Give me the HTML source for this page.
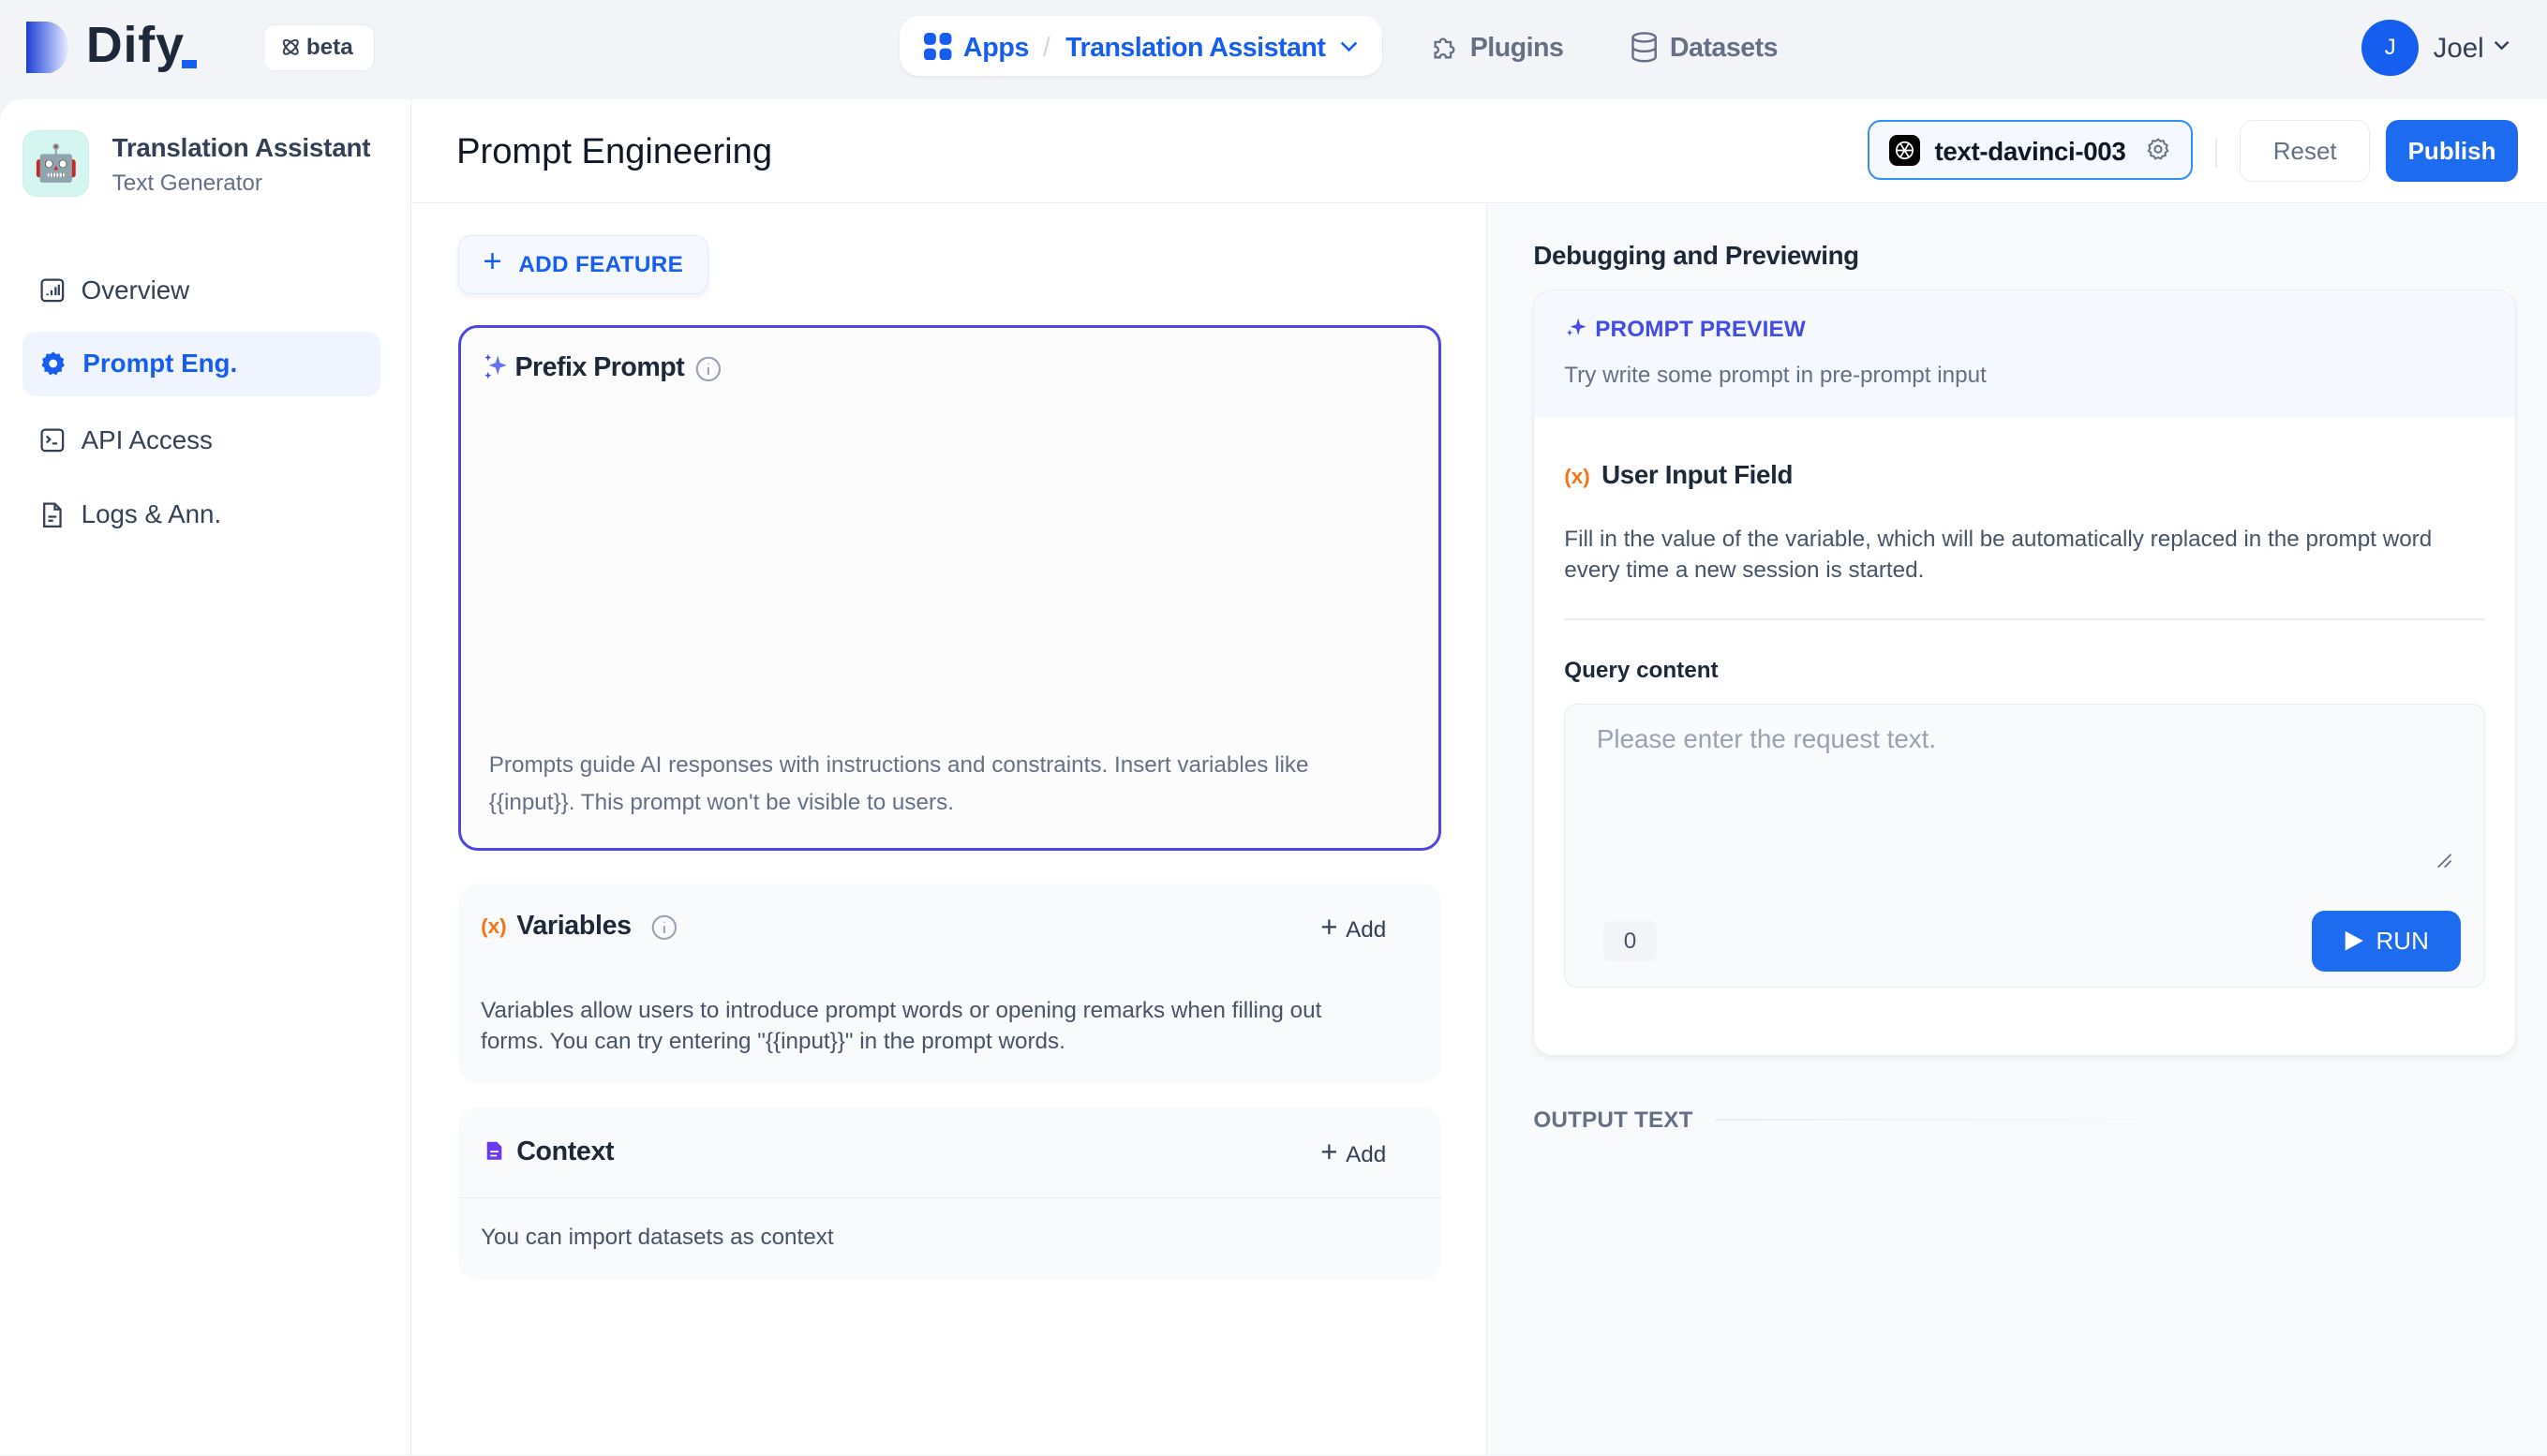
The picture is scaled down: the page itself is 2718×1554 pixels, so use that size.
<!DOCTYPE html>
<html><head><meta charset="utf-8"><style>
*{box-sizing:border-box;margin:0;padding:0}
html,body{width:2718px;height:1554px;overflow:hidden}
body{font-family:"Liberation Sans",sans-serif;background:#f2f4f7;color:#101828}
#r{width:1568px;height:896px;zoom:1.7334;position:relative;background:#f2f4f7}
.a{position:absolute}
.main{left:0;top:61px;width:1568px;height:835px;background:#fff;border-top-left-radius:14px}
.side{left:0;top:0;width:253px;height:835px;border-right:1px solid #eaecf0}
.nav{position:absolute;left:14px;width:220px;height:40px;border-radius:8px;display:flex;align-items:center;padding-left:10px;font-size:16px;color:#344054}
.nav svg{margin-right:10px}
.btn{position:absolute;border-radius:8px;display:flex;align-items:center;justify-content:center;font-size:15px}
</style></head><body><div id="r">
<div class="a" style="left:16px;top:13px;width:30px;height:32px">
<svg width="30" height="32" viewBox="0 0 30 32"><defs><linearGradient id="g" x1="0" y1="0" x2="1" y2="0"><stop offset="0" stop-color="#1c3fd4"/><stop offset="1" stop-color="#e8eeff"/></linearGradient></defs><path d="M0 0H12A14 16 0 0 1 12 32H0Z" fill="url(#g)"/></svg></div>
<div class="a" style="left:53px;top:10px;font-size:31px;font-weight:bold;color:#1d2939;letter-spacing:0.5px">Dify</div>
<div class="a" style="left:112px;top:37px;width:9px;height:5px;background:#155eef"></div>
<div class="a" style="left:162px;top:15px;width:69px;height:29px;background:#fff;border:1px solid #eaecf0;border-radius:7px;font-size:14px;font-weight:bold;color:#344054;padding:6px 0 0 10px">
<svg width="13" height="13" viewBox="0 0 14 14" style="vertical-align:-2px;margin-right:3px"><g fill="none" stroke="#344054" stroke-width="1.2"><ellipse cx="7" cy="7" rx="6" ry="2.6" transform="rotate(45 7 7)"/><ellipse cx="7" cy="7" rx="6" ry="2.6" transform="rotate(-45 7 7)"/></g></svg>beta</div>
<div class="a" style="left:554px;top:10px;width:297px;height:37px;background:#fff;border-radius:12px;box-shadow:0 1px 2px rgba(16,24,40,.06)"></div>
<svg class="a" style="left:569px;top:20px" width="17" height="17" viewBox="0 0 16 16"><g fill="#155eef"><rect x="0" y="0" width="7" height="7" rx="2.5"/><rect x="9" y="0" width="7" height="7" rx="2.5"/><rect x="0" y="9" width="7" height="7" rx="2.5"/><rect x="9" y="9" width="7" height="7" rx="2.5"/></g></svg>
<div class="a" style="left:593px;top:20px;font-size:16.5px;font-weight:bold;color:#155eef;letter-spacing:-0.2px">Apps</div>
<div class="a" style="left:642px;top:20px;font-size:16.5px;color:#d0d5dd">/</div>
<div class="a" style="left:656px;top:20px;font-size:16.5px;font-weight:bold;color:#155eef;letter-spacing:-0.3px">Translation Assistant</div>
<svg class="a" style="left:825px;top:25px" width="11" height="8" viewBox="0 0 11 8"><path d="M1 1.5L5.5 6 10 1.5" fill="none" stroke="#155eef" stroke-width="1.5"/></svg>
<svg class="a" style="left:880px;top:20px" width="19" height="19" viewBox="0 0 20 20"><path d="M4 6h3a2 2 0 1 1 4 0h3v3a2 2 0 1 1 0 4v3h-3a2 2 0 1 0-4 0H4v-3a2 2 0 1 0 0-4z" fill="none" stroke="#667085" stroke-width="1.4"/></svg>
<div class="a" style="left:905px;top:20px;font-size:16.5px;font-weight:bold;color:#667085;letter-spacing:-0.3px">Plugins</div>
<svg class="a" style="left:1003px;top:19px" width="18" height="20" viewBox="0 0 18 20"><g fill="none" stroke="#667085" stroke-width="1.4"><ellipse cx="9" cy="4" rx="7" ry="2.6"/><path d="M2 4v12c0 1.4 3 2.6 7 2.6s7-1.2 7-2.6V4M2 10c0 1.4 3 2.6 7 2.6s7-1.2 7-2.6"/></g></svg>
<div class="a" style="left:1028px;top:20px;font-size:16.5px;font-weight:bold;color:#667085;letter-spacing:-0.3px">Datasets</div>
<div class="a" style="left:1454px;top:12px;width:35px;height:35px;border-radius:50%;background:#155eef;color:#fff;font-size:14px;text-align:center;line-height:35px">J</div>
<div class="a" style="left:1498px;top:20px;font-size:17px;color:#344054">Joel</div>
<svg class="a" style="left:1535px;top:25px" width="10" height="7" viewBox="0 0 10 7"><path d="M1 1l4 4 4-4" fill="none" stroke="#344054" stroke-width="1.4"/></svg>

<div class="a main">
 <div class="a side">
  <div class="a" style="left:14px;top:19px;width:41px;height:41px;border-radius:9px;background:#d5f5f0;border:1px solid #ccefe8;text-align:center;font-size:22px;line-height:40px">🤖</div>
  <div class="a" style="left:69px;top:21px;font-size:16px;font-weight:bold;color:#344054;letter-spacing:-0.1px">Translation Assistant</div>
  <div class="a" style="left:69px;top:44px;font-size:14px;color:#667085">Text Generator</div>
  <div class="nav" style="top:98px"><svg width="16" height="16" viewBox="0 0 16 16"><g fill="none" stroke="#344054" stroke-width="1.3"><rect x="1.5" y="1.5" width="13" height="13" rx="2"/><path d="M5 11v-1M7.5 11V8M10 11V6M12 11V4.5"/></g></svg>Overview</div>
  <div class="nav" style="top:143px;background:#eff4ff;color:#155eef;font-weight:bold"><svg width="17" height="17" viewBox="0 0 16 16"><path d="M8 0.8l1.6 1.4 2.1-.3.6 2 1.9 1-.6 2 1 1.9-1.7 1.3.1 2.1-2.1.3-1.1 1.8L8 13.4l-1.9.9-1.1-1.8-2.1-.3.1-2.1L1.3 8.8l1-1.9-.6-2 1.9-1 .6-2 2.1.3z" fill="#155eef"/><circle cx="8" cy="7.6" r="2.4" fill="#eff4ff"/></svg>Prompt Eng.</div>
  <div class="nav" style="top:190px"><svg width="16" height="16" viewBox="0 0 16 16"><g fill="none" stroke="#344054" stroke-width="1.3"><rect x="1.5" y="1.5" width="13" height="13" rx="2"/><path d="M4.5 5.5l2 2-2 2M8 10h3"/></g></svg>API Access</div>
  <div class="nav" style="top:236px"><svg width="16" height="17" viewBox="0 0 16 17"><g fill="none" stroke="#344054" stroke-width="1.3"><path d="M3 1.5h6.5l3.5 3.5v10.5H3z"/><path d="M9.5 1.5V5H13M5.5 9.5h5M5.5 12h3"/></g></svg>Logs &amp; Ann.</div>
 </div>
 <div class="a" style="left:253px;top:0;width:1315px;height:64px;border-bottom:1px solid #eaecf0"></div>
 <div class="a" style="left:281px;top:20px;font-size:22px;color:#101828">Prompt Engineering</div>
 <div class="a" style="left:1150px;top:13px;width:200px;height:37px;border:1.5px solid #2e90fa;border-radius:8px;background:#f5f8ff"></div>
 <div class="a" style="left:1163px;top:22px;width:19px;height:19px;border-radius:5px;background:#000"><svg width="19" height="19" viewBox="0 0 19 19"><g fill="none" stroke="#fff" stroke-width="1"><circle cx="9.5" cy="9.5" r="5"/><path d="M7 5.5l5 8M12 5.5l-5 8M5 9.5h9"/></g></svg></div>
 <div class="a" style="left:1191px;top:23px;font-size:16px;font-weight:bold;color:#101828;letter-spacing:-0.2px">text-davinci-003</div>
 <svg class="a" style="left:1321px;top:24px" width="15" height="15" viewBox="0 0 16 16"><g fill="none" stroke="#667085" stroke-width="1.2"><path d="M8 1l1.5 1.3 2-.3.6 1.9 1.8 1-.6 1.9 1 1.8-1.6 1.2.1 2-2 .3-1 1.7L8 13l-1.8.8-1-1.7-2-.3.1-2L1.7 8.6l1-1.8-.6-1.9 1.8-1 .6-1.9 2 .3z"/><circle cx="8" cy="7.5" r="2.2"/></g></svg>
 <div class="a" style="left:1364px;top:24px;width:1px;height:18px;background:#eaecf0"></div>
 <div class="btn" style="left:1379px;top:13px;width:80px;height:38px;border:1px solid #eaecf0;color:#667085;background:#fff">Reset</div>
 <div class="btn" style="left:1469px;top:13px;width:81px;height:38px;background:#1d6cf0;color:#fff;font-weight:bold">Publish</div>
 <div class="btn" style="left:282px;top:84px;width:154px;height:36px;background:#f5f8ff;border:1px solid #e0eaff;color:#155eef;font-weight:bold;font-size:14px;box-shadow:0 2px 4px rgba(16,24,40,.06);letter-spacing:.2px"><span style="font-size:20px;font-weight:normal;margin-right:10px;margin-top:-3px">+</span>ADD FEATURE</div>
 <div class="a" style="left:282px;top:139px;width:605px;height:324px;border:2px solid #4f46e5;border-radius:12px;background:#fcfcfd"></div>
 <svg class="a" style="left:296px;top:156px" width="17" height="18" viewBox="0 0 16 18"><path d="M10 2l1.3 4.5L15.5 8l-4.2 1.5L10 14l-1.3-4.5L4.5 8l4.2-1.5z" fill="#6172f3"/><path d="M4 1l.6 1.6L6 3.2l-1.4.6L4 5.5l-.6-1.7L2 3.2l1.4-.6zM4 12l.6 1.6 1.4.6-1.4.6L4 16.5l-.6-1.7L2 14.2l1.4-.6z" fill="#444ce7"/></svg>
 <div class="a" style="left:317px;top:156px;font-size:16.5px;font-weight:bold;color:#1d2939;letter-spacing:-0.3px">Prefix Prompt</div>
 <svg class="a" style="left:428px;top:158px" width="16" height="16" viewBox="0 0 16 16"><g fill="none" stroke="#98a2b3" stroke-width="1.2"><circle cx="8" cy="8" r="7"/><path d="M8 7v4.5M8 4.5v.5"/></g></svg>
 <div class="a" style="left:301px;top:399px;width:545px;font-size:14px;line-height:23px;color:#667085">Prompts guide AI responses with instructions and constraints. Insert variables like {{input}}. This prompt won't be visible to users.</div>

 <div class="a" style="left:282px;top:483px;width:605px;height:123px;background:#f9fafb;border-radius:12px"></div>
 <div class="a" style="left:296px;top:502px;font-size:13px;color:#f97316;font-weight:bold">(x)</div>
 <div class="a" style="left:318px;top:500px;font-size:16.5px;font-weight:bold;color:#1d2939;letter-spacing:-0.2px">Variables</div>
 <svg class="a" style="left:401px;top:502px" width="16" height="16" viewBox="0 0 16 16"><g fill="none" stroke="#98a2b3" stroke-width="1.2"><circle cx="8" cy="8" r="7"/><path d="M8 7v4.5M8 4.5v.5"/></g></svg>
 <div class="a" style="left:813px;top:500px;font-size:14px;color:#344054"><span style="font-size:18px;margin-right:5px">+</span>Add</div>
 <div class="a" style="left:296px;top:552px;width:555px;font-size:14px;line-height:19px;color:#475467">Variables allow users to introduce prompt words or opening remarks when filling out forms. You can try entering "{{input}}" in the prompt words.</div>

 <div class="a" style="left:282px;top:621px;width:605px;height:106px;background:#f9fafb;border-radius:12px"></div>
 <div class="a" style="left:282px;top:676px;width:605px;height:1px;background:#eaecf0"></div>
 <svg class="a" style="left:299px;top:641px" width="11" height="13" viewBox="0 0 11 13"><path d="M1 1h6l3 3v8H1z" fill="#6938ef"/><path d="M3 7h5M3 9.5h4" stroke="#fff" stroke-width="1"/></svg>
 <div class="a" style="left:318px;top:639px;font-size:16.5px;font-weight:bold;color:#1d2939;letter-spacing:-0.2px">Context</div>
 <div class="a" style="left:813px;top:638px;font-size:14px;color:#344054"><span style="font-size:18px;margin-right:5px">+</span>Add</div>
 <div class="a" style="left:296px;top:693px;font-size:14px;color:#475467">You can import datasets as context</div>

 <div class="a" style="left:915px;top:65px;width:653px;height:770px;background:#f9fafb;border-left:1px solid #eaecf0"></div>
 <div class="a" style="left:944px;top:87px;font-size:16px;font-weight:bold;color:#1d2939;letter-spacing:-0.2px">Debugging and Previewing</div>
 <div class="a" style="left:944px;top:117px;width:605px;height:472px;background:#fff;border:1px solid #eaecf0;border-radius:12px;box-shadow:0 2px 4px rgba(16,24,40,.05);overflow:hidden">
  <div style="height:79px;background:#f5f8ff"></div>
 </div>
 <svg class="a" style="left:963px;top:134px" width="14" height="14" viewBox="0 0 16 16"><path d="M10 1l1.3 4.5L15.5 7l-4.2 1.5L10 13l-1.3-4.5L4.5 7l4.2-1.5z" fill="#444ce7"/><path d="M4 9l.6 1.6 1.4.6-1.4.6L4 13.5l-.6-1.7L2 11.2l1.4-.6z" fill="#444ce7"/></svg>
 <div class="a" style="left:982px;top:134px;font-size:14px;font-weight:bold;color:#444ce7;letter-spacing:.1px">PROMPT PREVIEW</div>
 <div class="a" style="left:963px;top:162px;font-size:14px;color:#667085">Try write some prompt in pre-prompt input</div>
 <div class="a" style="left:963px;top:225px;font-size:13px;color:#f97316;font-weight:bold">(x)</div>
 <div class="a" style="left:986px;top:222px;font-size:16px;font-weight:bold;color:#1d2939;letter-spacing:-0.2px">User Input Field</div>
 <div class="a" style="left:963px;top:262px;width:572px;font-size:14px;line-height:19px;color:#475467">Fill in the value of the variable, which will be automatically replaced in the prompt word every time a new session is started.</div>
 <div class="a" style="left:963px;top:320px;width:567px;height:1px;background:#eaecf0"></div>
 <div class="a" style="left:963px;top:344px;font-size:14px;font-weight:bold;color:#1d2939">Query content</div>
 <div class="a" style="left:963px;top:372px;width:567px;height:175px;background:#f9fafb;border:1px solid #eaecf0;border-radius:8px"></div>
 <div class="a" style="left:983px;top:385px;font-size:16px;color:#98a2b3">Please enter the request text.</div>
 <svg class="a" style="left:1500px;top:464px" width="10" height="10" viewBox="0 0 10 10"><path d="M9 1L1 9M9 5L5 9" stroke="#667085" stroke-width="1"/></svg>
 <div class="a" style="left:987px;top:506px;width:33px;height:25px;background:#f2f4f7;border-radius:5px;font-size:14px;color:#475467;text-align:center;line-height:25px">0</div>
 <div class="btn" style="left:1423px;top:500px;width:92px;height:37px;background:#1d6cf0;color:#fff;font-size:15px"><svg width="13" height="14" viewBox="0 0 13 14" style="margin-right:7px"><path d="M1 1l11 6-11 6z" fill="#fff"/></svg>RUN</div>
 <div class="a" style="left:944px;top:621px;font-size:14px;font-weight:bold;color:#667085;letter-spacing:.1px">OUTPUT TEXT</div>
 <div class="a" style="left:1056px;top:628px;width:320px;height:1px;background:linear-gradient(90deg,#eaecf0,rgba(234,236,240,0))"></div>
</div>
</div></body></html>
